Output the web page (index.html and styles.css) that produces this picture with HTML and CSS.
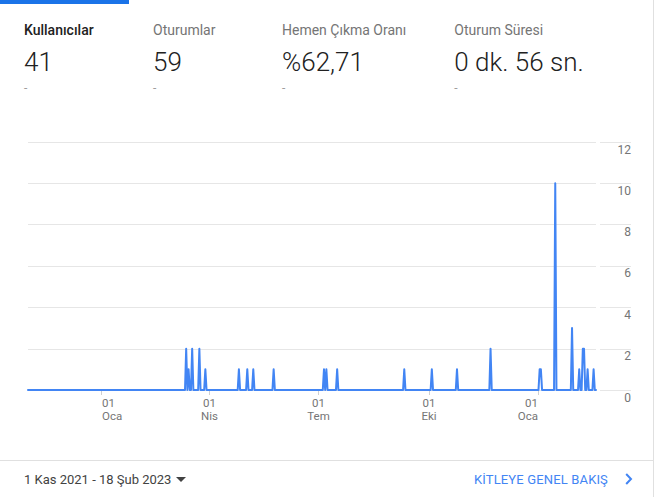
FILE: index.html
```html
<!DOCTYPE html>
<html lang="tr">
<head>
<meta charset="utf-8">
<title>Kitleye Genel Bakış</title>
<link rel="stylesheet" href="styles.css">
</head>
<body>
<div class="card">
  <div class="tabs">
    <div class="tab active">
      <div class="tab-label">Kullanıcılar</div>
      <div class="tab-value">41</div>
      <div class="tab-delta">-</div>
    </div>
    <div class="tab">
      <div class="tab-label">Oturumlar</div>
      <div class="tab-value">59</div>
      <div class="tab-delta">-</div>
    </div>
    <div class="tab">
      <div class="tab-label">Hemen Çıkma Oranı</div>
      <div class="tab-value">%62,71</div>
      <div class="tab-delta">-</div>
    </div>
    <div class="tab">
      <div class="tab-label">Oturum Süresi</div>
      <div class="tab-value">0 dk. 56 sn.</div>
      <div class="tab-delta">-</div>
    </div>
  </div>

  <svg class="chart" viewBox="0 100 653 360" width="653" height="360">
    <g class="grid">
      <line x1="28" y1="142.5" x2="596" y2="142.5"/>
      <line x1="28" y1="183.5" x2="596" y2="183.5"/>
      <line x1="28" y1="224.5" x2="596" y2="224.5"/>
      <line x1="28" y1="266.5" x2="596" y2="266.5"/>
      <line x1="28" y1="307.5" x2="596" y2="307.5"/>
      <line x1="28" y1="349.5" x2="596" y2="349.5"/>
      <line x1="28" y1="390.5" x2="596" y2="390.5"/>
      <line x1="600" y1="142.5" x2="631" y2="142.5"/>
      <line x1="600" y1="183.5" x2="631" y2="183.5"/>
      <line x1="600" y1="224.5" x2="631" y2="224.5"/>
      <line x1="600" y1="266.5" x2="631" y2="266.5"/>
      <line x1="600" y1="307.5" x2="631" y2="307.5"/>
      <line x1="600" y1="349.5" x2="631" y2="349.5"/>
      <line x1="600" y1="390.5" x2="631" y2="390.5"/>
    </g>
    <g class="ticks">
      <line x1="101.5" y1="390" x2="101.5" y2="395"/>
      <line x1="209.5" y1="390" x2="209.5" y2="395"/>
      <line x1="318.5" y1="390" x2="318.5" y2="395"/>
      <line x1="429.5" y1="390" x2="429.5" y2="395"/>
      <line x1="538.5" y1="390" x2="538.5" y2="395"/>
    </g>
    <g class="ylabels">
      <text x="631" y="153.5">12</text>
      <text x="631" y="194.5">10</text>
      <text x="631" y="235.5">8</text>
      <text x="631" y="277">6</text>
      <text x="631" y="318.5">4</text>
      <text x="631" y="360">2</text>
      <text x="631" y="401.5">0</text>
    </g>
    <g class="xlabels">
      <text class="start" x="102" y="406.5">01</text>
      <text class="start" x="102" y="419.5">Oca</text>
      <text class="mid" x="209.5" y="406.5">01</text>
      <text class="mid" x="209.5" y="419.5">Nis</text>
      <text class="mid" x="318.5" y="406.5">01</text>
      <text class="mid" x="318.5" y="419.5">Tem</text>
      <text class="mid" x="429" y="406.5">01</text>
      <text class="mid" x="429" y="419.5">Eki</text>
      <text class="end" x="538" y="406.5">01</text>
      <text class="end" x="538" y="419.5">Oca</text>
    </g>
    <polyline class="series" points="28,390 185,390 186.18,348.67 187.37,390 188.57,369.33 189.77,390 190.97,390 192.17,348.67 193.37,390 198.16,390 199.36,348.67 200.56,390 204.15,390 205.35,369.33 206.55,390 237.7,390 238.9,369.33 240.1,390 246.09,390 247.29,369.33 248.49,390 252.08,390 253.28,369.33 254.48,390 272.45,390 273.65,369.33 274.85,390 322.78,390 323.98,369.33 325.18,390 326.37,369.33 327.57,390 335.96,390 337.16,369.33 338.36,390 403.07,390 404.27,369.33 405.47,390 430.63,390 431.83,369.33 433.03,390 455.79,390 456.99,369.33 458.19,390 489.35,390 490.54,348.67 491.74,390 538.48,390 539.67,369.33 540.87,369.33 542.07,390 554.05,390 555.25,183.33 556.45,390 570.83,390 572.03,328 573.23,390 578.02,390 579.22,369.33 580.42,390 581.62,390 582.82,348.67 584.02,348.67 585.22,390 586.41,390 587.61,369.33 588.81,390 592.41,390 593.6,369.33 594.8,390 596,390"/>
  </svg>

  <div class="footer">
    <div class="range">
      <span>1 Kas 2021 - 18 Şub 2023</span>
      <svg class="caret" viewBox="0 0 10 5" width="10" height="5"><path d="M0 0 L10 0 L5 5 Z"/></svg>
    </div>
    <a class="overview" href="#">
      <span>KİTLEYE GENEL BAKIŞ</span>
      <svg class="chev" viewBox="0 0 8 12" width="8" height="12"><path d="M1.2 1 L6 6 L1.2 11"/></svg>
    </a>
  </div>
</div>
</body>
</html>
```

FILE: styles.css
```css
html, body {
  margin: 0;
  padding: 0;
  background: #ffffff;
}

body {
  font-family: Roboto, "Noto Sans", "Liberation Sans", sans-serif;
  color: #212121;
}

.card {
  width: 654px;
  height: 497px;
  box-sizing: border-box;
  border-right: 1px solid #e0e0e0;
  display: flex;
  flex-direction: column;
  overflow: hidden;
}

.tabs {
  display: flex;
  height: 100px;
  flex: none;
}

.tab {
  box-sizing: border-box;
  min-width: 129px;
  padding: 18px 24px 0;
  border-top: 4px solid transparent;
}

.tab.active {
  border-top-color: #1a73e8;
}

.tab-label {
  font-size: 14px;
  line-height: 16px;
  color: #757575;
  white-space: nowrap;
}

.tab.active .tab-label {
  color: #212121;
  font-weight: 500;
}

.tab-value {
  margin-top: 9px;
  font-size: 26px;
  line-height: 31px;
  font-weight: 300;
  color: #212121;
  white-space: nowrap;
}

.tab-delta {
  margin-top: 3px;
  font-size: 12px;
  line-height: 14px;
  color: #9e9e9e;
}

.chart {
  display: block;
  flex: none;
}

.grid line {
  stroke: #e6e6e6;
  stroke-width: 1;
  shape-rendering: crispEdges;
}

.ticks line {
  stroke: #d0d0d0;
  stroke-width: 1;
  shape-rendering: crispEdges;
}

.ylabels text {
  font-family: Roboto, "Liberation Sans", sans-serif;
  font-size: 12px;
  fill: #757575;
  text-anchor: end;
}

.xlabels text {
  font-family: Roboto, "Liberation Sans", sans-serif;
  font-size: 11.5px;
  fill: #757575;
}

.xlabels .start {
  text-anchor: start;
}

.xlabels .mid {
  text-anchor: middle;
}

.xlabels .end {
  text-anchor: end;
}

.series {
  fill: none;
  stroke: #4285f4;
  stroke-width: 2;
  stroke-linejoin: round;
  stroke-linecap: round;
}

.footer {
  flex: none;
  box-sizing: border-box;
  height: 37px;
  border-top: 1px solid #e0e0e0;
  padding: 0 20px 0 24px;
  display: flex;
  align-items: center;
  justify-content: space-between;
}

.range {
  display: flex;
  align-items: center;
  gap: 5px;
  font-size: 13px;
  color: #424242;
}

.caret path {
  fill: #424242;
}

.overview {
  display: flex;
  align-items: center;
  gap: 17px;
  font-size: 13px;
  letter-spacing: 0.15px;
  color: #4285f4;
  text-decoration: none;
}

.chev path {
  fill: none;
  stroke: #4285f4;
  stroke-width: 2;
}
```
